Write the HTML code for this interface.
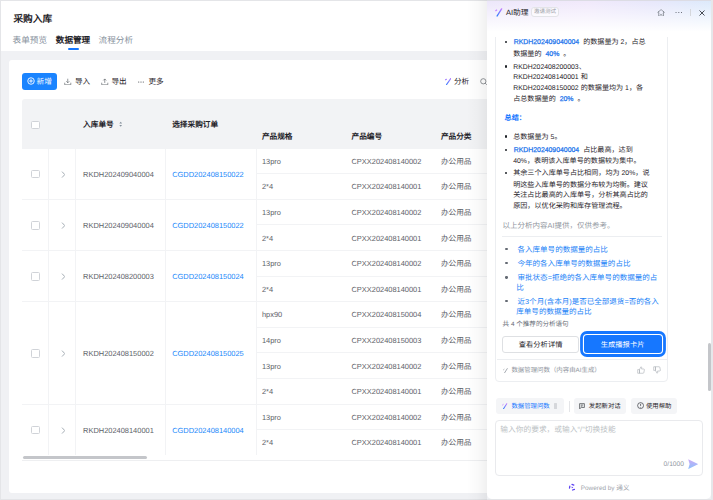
<!DOCTYPE html>
<html lang="zh-CN"><head><meta charset="utf-8"><style>
*{box-sizing:border-box;margin:0;padding:0}
html,body{width:713px;height:500px;overflow:hidden}
body{position:relative;background:#f0f1f4;font-family:"Liberation Sans",sans-serif;color:#1f2329;text-rendering:geometricPrecision}
.a{position:absolute}
.t{position:absolute;white-space:nowrap;transform-origin:0 0}
.c{font-size:103%;font-weight:500}
</style></head><body>
<div class="a" style="left:0.00px;top:0.00px;width:713.00px;height:1.00px;background:#e4e5e8"></div>
<div class="a" style="left:1.00px;top:1.00px;width:712.00px;height:49.50px;background:#fff"></div>
<div class="a" style="left:0.00px;top:0.00px;width:1.00px;height:500.00px;background:#e4e5e8"></div>
<div class="a" style="left:0.00px;top:498.80px;width:713.00px;height:1.20px;background:#e3e4e7"></div>
<div class="a" style="left:711.20px;top:0.00px;width:1.80px;height:500.00px;background:#e6e7ea"></div>
<div class="t" style="left:13.40px;top:12.32px;font-size:9.400px;line-height:13.160px;color:#1f2329;font-weight:400;transform:none;"><span class="c" style="font-weight:700">采购入库</span></div>
<div class="t" style="left:12.60px;top:34.85px;font-size:8.350px;line-height:11.690px;color:#86909c;font-weight:400;transform:none;"><span class="c">表单预览</span></div>
<div class="t" style="left:55.80px;top:34.85px;font-size:8.350px;line-height:11.690px;color:#1f2329;font-weight:400;transform:none;"><span class="c" style="font-weight:700">数据管理</span></div>
<div class="t" style="left:98.60px;top:34.85px;font-size:8.350px;line-height:11.690px;color:#86909c;font-weight:400;transform:none;"><span class="c">流程分析</span></div>
<div class="a" style="left:68.00px;top:48.30px;width:11.00px;height:2.00px;border-radius:1px;background:#1677ff"></div>
<div class="a" style="left:9.00px;top:60.00px;width:690.00px;height:432.50px;background:#fff;border-radius:3px"></div>
<div class="a" style="left:21.60px;top:73.00px;width:35.60px;height:17.00px;background:#1a84ff;border-radius:3px"></div>
<svg class="a" style="left:26.60px;top:77.20px;" width="8" height="8" viewBox="0 0 16 16"><circle cx="8" cy="8" r="6.5" fill="none" stroke="#fff" stroke-width="1.8"/><path d="M8 4.4v7.2M4.4 8h7.2" stroke="#fff" stroke-width="1.8"/></svg>
<div class="t" style="left:36.60px;top:76.98px;font-size:7.450px;line-height:10.430px;color:#fff;font-weight:400;transform:none;"><span class="c">新增</span></div>
<svg class="a" style="left:64.30px;top:77.50px;" width="7.5" height="7.5" viewBox="0 0 16 16"><path d="M8 1.5v8.5M4.8 7l3.2 3.2L11.2 7M1.5 10v4.5h13V10" fill="none" stroke="#5d6168" stroke-width="1.4"/></svg>
<div class="t" style="left:74.90px;top:76.98px;font-size:7.450px;line-height:10.430px;color:#1f2329;font-weight:400;transform:none;"><span class="c">导入</span></div>
<svg class="a" style="left:101.30px;top:77.50px;" width="7.5" height="7.5" viewBox="0 0 16 16"><path d="M8 10.5V2M4.8 5.2L8 2l3.2 3.2M1.5 10v4.5h13V10" fill="none" stroke="#5d6168" stroke-width="1.4"/></svg>
<div class="t" style="left:111.40px;top:76.98px;font-size:7.450px;line-height:10.430px;color:#1f2329;font-weight:400;transform:none;"><span class="c">导出</span></div>
<svg class="a" style="left:138.30px;top:81.10px;" width="6" height="2" viewBox="0 0 12 4"><circle cx="1.5" cy="2" r="1" fill="#1f2329"/><circle cx="6" cy="2" r="1" fill="#1f2329"/><circle cx="10.5" cy="2" r="1" fill="#1f2329"/></svg>
<div class="t" style="left:148.40px;top:76.98px;font-size:7.450px;line-height:10.430px;color:#1f2329;font-weight:400;transform:none;"><span class="c">更多</span></div>
<svg class="a" style="left:444.50px;top:78.00px;" width="6.5" height="7" viewBox="0 0 13 14"><defs><linearGradient id="g1" x1="1" y1="0" x2="0" y2="1"><stop offset="0" stop-color="#b37cff"/><stop offset="1" stop-color="#3a7bff"/></linearGradient></defs><path d="M11.5 1L3.2 13" stroke="url(#g1)" stroke-width="2.5" stroke-linecap="round"/><path d="M1.2 3.6L2.8 2.5" stroke="#a27cff" stroke-width="2.2" stroke-linecap="round"/></svg>
<div class="t" style="left:453.90px;top:76.98px;font-size:7.450px;line-height:10.430px;color:#1f2329;font-weight:400;transform:none;"><span class="c">分析</span></div>
<svg class="a" style="left:479.70px;top:77.80px;" width="7.5" height="7.5" viewBox="0 0 16 16"><circle cx="7" cy="7" r="5.6" fill="none" stroke="#5d6168" stroke-width="1.4"/><path d="M11 11l3.5 3.5" stroke="#5d6168" stroke-width="1.4"/></svg>
<div class="a" style="left:21.70px;top:99.00px;width:680.00px;height:49.50px;background:#f2f3f5;border-radius:3px 3px 0 0"></div>
<div class="a" style="left:31.20px;top:120.70px;width:8.50px;height:8.50px;border:1px solid #d0d3d8;border-radius:1.5px;background:#fff"></div>
<div class="t" style="left:83.10px;top:120.28px;font-size:7.450px;line-height:10.430px;color:#1f2329;font-weight:600;transform:none;"><span class="c" style="font-weight:700">入库单号</span></div>
<svg class="a" style="left:118.90px;top:121.20px;" width="3.4" height="6.4" viewBox="0 0 6 12"><path d="M0.4 4.6L3 1.4l2.6 3.2zM0.4 7.4L3 10.6l2.6-3.2z" fill="#86909c"/></svg>
<div class="t" style="left:172.20px;top:120.28px;font-size:7.450px;line-height:10.430px;color:#1f2329;font-weight:600;transform:none;"><span class="c" style="font-weight:700">选择采购订单</span></div>
<div class="t" style="left:261.90px;top:132.28px;font-size:7.450px;line-height:10.430px;color:#1f2329;font-weight:600;transform:none;"><span class="c" style="font-weight:700">产品规格</span></div>
<div class="t" style="left:351.50px;top:132.28px;font-size:7.450px;line-height:10.430px;color:#1f2329;font-weight:600;transform:none;"><span class="c" style="font-weight:700">产品编号</span></div>
<div class="t" style="left:440.90px;top:132.28px;font-size:7.450px;line-height:10.430px;color:#1f2329;font-weight:600;transform:none;"><span class="c" style="font-weight:700">产品分类</span></div>
<div class="a" style="left:48.30px;top:148.50px;width:1.00px;height:306.00px;background:#f2f3f5"></div>
<div class="a" style="left:75.40px;top:148.50px;width:1.00px;height:306.00px;background:#f2f3f5"></div>
<div class="a" style="left:165.40px;top:148.50px;width:1.00px;height:306.00px;background:#f2f3f5"></div>
<div class="a" style="left:255.50px;top:148.50px;width:1.00px;height:306.00px;background:#f2f3f5"></div>
<div class="a" style="left:21.70px;top:198.80px;width:680.00px;height:1.00px;background:#f2f3f5"></div>
<div class="a" style="left:31.20px;top:169.85px;width:8.50px;height:8.50px;border:1px solid #d0d3d8;border-radius:1.5px;background:#fff"></div>
<svg class="a" style="left:60.50px;top:170.50px;" width="4.6" height="7.2" viewBox="0 0 9 14"><path d="M2 1.2L7.4 7 2 12.8" fill="none" stroke="#77828f" stroke-width="1.3"/></svg>
<div class="t" style="left:83.10px;top:169.69px;font-size:7.450px;line-height:10.430px;color:#5d6168;font-weight:400;transform:none;">RKDH202409040004</div>
<div class="t" style="left:172.20px;top:169.69px;font-size:7.450px;line-height:10.430px;color:#1a88fa;font-weight:400;transform:none;">CGDD202408150022</div>
<div class="a" style="left:255.50px;top:173.20px;width:440.00px;height:1.00px;background:#f2f3f5"></div>
<div class="t" style="left:261.90px;top:156.89px;font-size:7.450px;line-height:10.430px;color:#5d6168;font-weight:400;transform:none;">13pro</div>
<div class="t" style="left:351.50px;top:156.89px;font-size:7.450px;line-height:10.430px;color:#5d6168;font-weight:400;transform:none;">CPXX202408140002</div>
<div class="t" style="left:440.90px;top:156.89px;font-size:7.450px;line-height:10.430px;color:#5d6168;font-weight:400;transform:none;"><span class="c">办公用品</span></div>
<div class="t" style="left:261.90px;top:182.49px;font-size:7.450px;line-height:10.430px;color:#5d6168;font-weight:400;transform:none;">2*4</div>
<div class="t" style="left:351.50px;top:182.49px;font-size:7.450px;line-height:10.430px;color:#5d6168;font-weight:400;transform:none;">CPXX202408140001</div>
<div class="t" style="left:440.90px;top:182.49px;font-size:7.450px;line-height:10.430px;color:#5d6168;font-weight:400;transform:none;"><span class="c">办公用品</span></div>
<div class="a" style="left:21.70px;top:250.00px;width:680.00px;height:1.00px;background:#f2f3f5"></div>
<div class="a" style="left:31.20px;top:221.05px;width:8.50px;height:8.50px;border:1px solid #d0d3d8;border-radius:1.5px;background:#fff"></div>
<svg class="a" style="left:60.50px;top:221.70px;" width="4.6" height="7.2" viewBox="0 0 9 14"><path d="M2 1.2L7.4 7 2 12.8" fill="none" stroke="#77828f" stroke-width="1.3"/></svg>
<div class="t" style="left:83.10px;top:220.88px;font-size:7.450px;line-height:10.430px;color:#5d6168;font-weight:400;transform:none;">RKDH202409040004</div>
<div class="t" style="left:172.20px;top:220.88px;font-size:7.450px;line-height:10.430px;color:#1a88fa;font-weight:400;transform:none;">CGDD202408150022</div>
<div class="a" style="left:255.50px;top:224.40px;width:440.00px;height:1.00px;background:#f2f3f5"></div>
<div class="t" style="left:261.90px;top:208.09px;font-size:7.450px;line-height:10.430px;color:#5d6168;font-weight:400;transform:none;">13pro</div>
<div class="t" style="left:351.50px;top:208.09px;font-size:7.450px;line-height:10.430px;color:#5d6168;font-weight:400;transform:none;">CPXX202408140002</div>
<div class="t" style="left:440.90px;top:208.09px;font-size:7.450px;line-height:10.430px;color:#5d6168;font-weight:400;transform:none;"><span class="c">办公用品</span></div>
<div class="t" style="left:261.90px;top:233.69px;font-size:7.450px;line-height:10.430px;color:#5d6168;font-weight:400;transform:none;">2*4</div>
<div class="t" style="left:351.50px;top:233.69px;font-size:7.450px;line-height:10.430px;color:#5d6168;font-weight:400;transform:none;">CPXX202408140001</div>
<div class="t" style="left:440.90px;top:233.69px;font-size:7.450px;line-height:10.430px;color:#5d6168;font-weight:400;transform:none;"><span class="c">办公用品</span></div>
<div class="a" style="left:21.70px;top:301.20px;width:680.00px;height:1.00px;background:#f2f3f5"></div>
<div class="a" style="left:31.20px;top:272.25px;width:8.50px;height:8.50px;border:1px solid #d0d3d8;border-radius:1.5px;background:#fff"></div>
<svg class="a" style="left:60.50px;top:272.90px;" width="4.6" height="7.2" viewBox="0 0 9 14"><path d="M2 1.2L7.4 7 2 12.8" fill="none" stroke="#77828f" stroke-width="1.3"/></svg>
<div class="t" style="left:83.10px;top:272.09px;font-size:7.450px;line-height:10.430px;color:#5d6168;font-weight:400;transform:none;">RKDH202408200003</div>
<div class="t" style="left:172.20px;top:272.09px;font-size:7.450px;line-height:10.430px;color:#1a88fa;font-weight:400;transform:none;">CGDD202408150024</div>
<div class="a" style="left:255.50px;top:275.60px;width:440.00px;height:1.00px;background:#f2f3f5"></div>
<div class="t" style="left:261.90px;top:259.29px;font-size:7.450px;line-height:10.430px;color:#5d6168;font-weight:400;transform:none;">13pro</div>
<div class="t" style="left:351.50px;top:259.29px;font-size:7.450px;line-height:10.430px;color:#5d6168;font-weight:400;transform:none;">CPXX202408140002</div>
<div class="t" style="left:440.90px;top:259.29px;font-size:7.450px;line-height:10.430px;color:#5d6168;font-weight:400;transform:none;"><span class="c">办公用品</span></div>
<div class="t" style="left:261.90px;top:284.89px;font-size:7.450px;line-height:10.430px;color:#5d6168;font-weight:400;transform:none;">2*4</div>
<div class="t" style="left:351.50px;top:284.89px;font-size:7.450px;line-height:10.430px;color:#5d6168;font-weight:400;transform:none;">CPXX202408140001</div>
<div class="t" style="left:440.90px;top:284.89px;font-size:7.450px;line-height:10.430px;color:#5d6168;font-weight:400;transform:none;"><span class="c">办公用品</span></div>
<div class="a" style="left:21.70px;top:403.60px;width:680.00px;height:1.00px;background:#f2f3f5"></div>
<div class="a" style="left:31.20px;top:349.05px;width:8.50px;height:8.50px;border:1px solid #d0d3d8;border-radius:1.5px;background:#fff"></div>
<svg class="a" style="left:60.50px;top:349.70px;" width="4.6" height="7.2" viewBox="0 0 9 14"><path d="M2 1.2L7.4 7 2 12.8" fill="none" stroke="#77828f" stroke-width="1.3"/></svg>
<div class="t" style="left:83.10px;top:348.88px;font-size:7.450px;line-height:10.430px;color:#5d6168;font-weight:400;transform:none;">RKDH202408150002</div>
<div class="t" style="left:172.20px;top:348.88px;font-size:7.450px;line-height:10.430px;color:#1a88fa;font-weight:400;transform:none;">CGDD202408150025</div>
<div class="a" style="left:255.50px;top:326.80px;width:440.00px;height:1.00px;background:#f2f3f5"></div>
<div class="t" style="left:261.90px;top:310.49px;font-size:7.450px;line-height:10.430px;color:#5d6168;font-weight:400;transform:none;">hpx90</div>
<div class="t" style="left:351.50px;top:310.49px;font-size:7.450px;line-height:10.430px;color:#5d6168;font-weight:400;transform:none;">CPXX202408150004</div>
<div class="t" style="left:440.90px;top:310.49px;font-size:7.450px;line-height:10.430px;color:#5d6168;font-weight:400;transform:none;"><span class="c">办公用品</span></div>
<div class="a" style="left:255.50px;top:352.40px;width:440.00px;height:1.00px;background:#f2f3f5"></div>
<div class="t" style="left:261.90px;top:336.09px;font-size:7.450px;line-height:10.430px;color:#5d6168;font-weight:400;transform:none;">14pro</div>
<div class="t" style="left:351.50px;top:336.09px;font-size:7.450px;line-height:10.430px;color:#5d6168;font-weight:400;transform:none;">CPXX202408150003</div>
<div class="t" style="left:440.90px;top:336.09px;font-size:7.450px;line-height:10.430px;color:#5d6168;font-weight:400;transform:none;"><span class="c">办公用品</span></div>
<div class="a" style="left:255.50px;top:378.00px;width:440.00px;height:1.00px;background:#f2f3f5"></div>
<div class="t" style="left:261.90px;top:361.69px;font-size:7.450px;line-height:10.430px;color:#5d6168;font-weight:400;transform:none;">13pro</div>
<div class="t" style="left:351.50px;top:361.69px;font-size:7.450px;line-height:10.430px;color:#5d6168;font-weight:400;transform:none;">CPXX202408140002</div>
<div class="t" style="left:440.90px;top:361.69px;font-size:7.450px;line-height:10.430px;color:#5d6168;font-weight:400;transform:none;"><span class="c">办公用品</span></div>
<div class="t" style="left:261.90px;top:387.29px;font-size:7.450px;line-height:10.430px;color:#5d6168;font-weight:400;transform:none;">2*4</div>
<div class="t" style="left:351.50px;top:387.29px;font-size:7.450px;line-height:10.430px;color:#5d6168;font-weight:400;transform:none;">CPXX202408140001</div>
<div class="t" style="left:440.90px;top:387.29px;font-size:7.450px;line-height:10.430px;color:#5d6168;font-weight:400;transform:none;"><span class="c">办公用品</span></div>
<div class="a" style="left:31.20px;top:425.85px;width:8.50px;height:8.50px;border:1px solid #d0d3d8;border-radius:1.5px;background:#fff"></div>
<svg class="a" style="left:60.50px;top:426.50px;" width="4.6" height="7.2" viewBox="0 0 9 14"><path d="M2 1.2L7.4 7 2 12.8" fill="none" stroke="#77828f" stroke-width="1.3"/></svg>
<div class="t" style="left:83.10px;top:425.69px;font-size:7.450px;line-height:10.430px;color:#5d6168;font-weight:400;transform:none;">RKDH202408140001</div>
<div class="t" style="left:172.20px;top:425.69px;font-size:7.450px;line-height:10.430px;color:#1a88fa;font-weight:400;transform:none;">CGDD202408140004</div>
<div class="a" style="left:255.50px;top:429.20px;width:440.00px;height:1.00px;background:#f2f3f5"></div>
<div class="t" style="left:261.90px;top:412.89px;font-size:7.450px;line-height:10.430px;color:#5d6168;font-weight:400;transform:none;">13pro</div>
<div class="t" style="left:351.50px;top:412.89px;font-size:7.450px;line-height:10.430px;color:#5d6168;font-weight:400;transform:none;">CPXX202408140002</div>
<div class="t" style="left:440.90px;top:412.89px;font-size:7.450px;line-height:10.430px;color:#5d6168;font-weight:400;transform:none;"><span class="c">办公用品</span></div>
<div class="t" style="left:261.90px;top:438.49px;font-size:7.450px;line-height:10.430px;color:#5d6168;font-weight:400;transform:none;">2*4</div>
<div class="t" style="left:351.50px;top:438.49px;font-size:7.450px;line-height:10.430px;color:#5d6168;font-weight:400;transform:none;">CPXX202408140001</div>
<div class="t" style="left:440.90px;top:438.49px;font-size:7.450px;line-height:10.430px;color:#5d6168;font-weight:400;transform:none;"><span class="c">办公用品</span></div>
<div class="a" style="left:21.70px;top:459.70px;width:680.00px;height:1.00px;background:#eeeff1"></div>
<div class="a" style="left:23.20px;top:455.90px;width:124.00px;height:3.00px;border-radius:1.5px;background:#c4c6ca"></div>
<div class="a" style="left:467.00px;top:0.00px;width:20.00px;height:500.00px;background:linear-gradient(90deg,rgba(0,0,0,0) 0%,rgba(0,0,0,0.02) 50%,rgba(0,0,0,0.06) 100%)"></div>
<div class="a" style="left:487.00px;top:0.00px;width:224.00px;height:498.50px;background:#fff;border-radius:0 0 5px 5px"></div>
<div class="a" style="left:495.20px;top:20.00px;width:172.60px;height:361.60px;border:1px solid #eceef1;border-radius:4px;background:#fff"></div>
<div class="a" style="left:505.05px;top:40.85px;width:2.30px;height:2.30px;border-radius:50%;background:#1f2329"></div>
<div class="t" style="left:513.20px;top:38.47px;font-size:6.900px;line-height:9.660px;color:#1f2329;font-weight:400;transform:none;margin-left:-1.5px"><span style="color:#1c74ec;font-weight:400;-webkit-text-stroke:0.25px #1c74ec;padding:0 2px">RKDH202409040004</span> <span class="c">的数据量为</span> 2<span class="c">，占总</span></div>
<div class="t" style="left:513.20px;top:49.87px;font-size:6.900px;line-height:9.660px;color:#1f2329;font-weight:400;transform:none;"><span class="c">数据量的</span> <span style="color:#1c74ec;font-weight:400;-webkit-text-stroke:0.25px #1c74ec;padding:0 2px">40%</span> <span class="c">。</span></div>
<div class="a" style="left:505.05px;top:65.35px;width:2.30px;height:2.30px;border-radius:50%;background:#1f2329"></div>
<div class="t" style="left:513.20px;top:63.17px;font-size:6.900px;line-height:9.660px;color:#1f2329;font-weight:400;transform:none;">RKDH202408200003<span class="c">、</span></div>
<div class="t" style="left:513.20px;top:73.47px;font-size:6.900px;line-height:9.660px;color:#1f2329;font-weight:400;transform:none;">RKDH202408140001 <span class="c">和</span></div>
<div class="t" style="left:513.20px;top:84.37px;font-size:6.900px;line-height:9.660px;color:#1f2329;font-weight:400;transform:none;">RKDH202408150002 <span class="c">的数据量均为</span> 1<span class="c">，各</span></div>
<div class="t" style="left:513.20px;top:95.47px;font-size:6.900px;line-height:9.660px;color:#1f2329;font-weight:400;transform:none;"><span class="c">占总数据量的</span> <span style="color:#1c74ec;font-weight:400;-webkit-text-stroke:0.25px #1c74ec;padding:0 2px">20%</span> <span class="c">。</span></div>
<div class="t" style="left:504.60px;top:113.97px;font-size:6.900px;line-height:9.660px;color:#1677ff;font-weight:600;transform:none;"><span class="c" style="font-weight:600">总结：</span></div>
<div class="a" style="left:505.05px;top:135.45px;width:2.30px;height:2.30px;border-radius:50%;background:#1f2329"></div>
<div class="t" style="left:513.20px;top:132.57px;font-size:6.900px;line-height:9.660px;color:#1f2329;font-weight:400;transform:none;"><span class="c">总数据量为</span> 5<span class="c">。</span></div>
<div class="a" style="left:505.05px;top:148.85px;width:2.30px;height:2.30px;border-radius:50%;background:#1f2329"></div>
<div class="t" style="left:513.20px;top:146.37px;font-size:6.900px;line-height:9.660px;color:#1f2329;font-weight:400;transform:none;margin-left:-1.5px"><span style="color:#1c74ec;font-weight:400;-webkit-text-stroke:0.25px #1c74ec;padding:0 2px">RKDH202409040004</span> <span class="c">占比最高，达到</span></div>
<div class="t" style="left:513.20px;top:157.17px;font-size:6.900px;line-height:9.660px;color:#1f2329;font-weight:400;transform:none;">40%<span class="c">，表明该入库单号的数据较为集中。</span></div>
<div class="a" style="left:505.05px;top:171.75px;width:2.30px;height:2.30px;border-radius:50%;background:#1f2329"></div>
<div class="t" style="left:513.20px;top:169.37px;font-size:6.900px;line-height:9.660px;color:#1f2329;font-weight:400;transform:none;"><span class="c">其余三个入库单号占比相同，均为</span> 20%<span class="c">，说</span></div>
<div class="t" style="left:513.20px;top:181.47px;font-size:6.900px;line-height:9.660px;color:#1f2329;font-weight:400;transform:none;"><span class="c">明这些入库单号的数据分布较为均衡。建议</span></div>
<div class="t" style="left:513.20px;top:191.17px;font-size:6.900px;line-height:9.660px;color:#1f2329;font-weight:400;transform:none;"><span class="c">关注占比最高的入库单号，分析其高占比的</span></div>
<div class="t" style="left:513.20px;top:202.27px;font-size:6.900px;line-height:9.660px;color:#1f2329;font-weight:400;transform:none;"><span class="c">原因，以优化采购和库存管理流程。</span></div>
<div class="t" style="left:502.60px;top:220.89px;font-size:7.300px;line-height:10.220px;color:#8f959e;font-weight:400;transform:none;"><span class="c">以上分析内容</span>AI<span class="c">提供，仅供参考。</span></div>
<div class="a" style="left:502.00px;top:235.60px;width:160.00px;height:1.00px;background:#eceef1"></div>
<div class="a" style="left:505.25px;top:248.05px;width:2.30px;height:2.30px;border-radius:50%;background:#646a73"></div>
<div class="t" style="left:517.50px;top:244.87px;font-size:7.330px;line-height:10.262px;color:#1a82f7;font-weight:400;transform:none;"><span class="c">各入库单号的数据量的占比</span></div>
<div class="a" style="left:505.25px;top:261.95px;width:2.30px;height:2.30px;border-radius:50%;background:#646a73"></div>
<div class="t" style="left:517.50px;top:258.77px;font-size:7.330px;line-height:10.262px;color:#1a82f7;font-weight:400;transform:none;"><span class="c">今年的各入库单号的数据量的占比</span></div>
<div class="a" style="left:505.25px;top:276.25px;width:2.30px;height:2.30px;border-radius:50%;background:#646a73"></div>
<div class="t" style="left:517.50px;top:273.07px;font-size:7.330px;line-height:10.262px;color:#1a82f7;font-weight:400;transform:none;"><span class="c">审批状态</span>=<span class="c">拒绝的各入库单号的数据量的占</span></div>
<div class="a" style="left:505.25px;top:300.05px;width:2.30px;height:2.30px;border-radius:50%;background:#646a73"></div>
<div class="t" style="left:517.50px;top:296.87px;font-size:7.330px;line-height:10.262px;color:#1a82f7;font-weight:400;transform:none;"><span class="c">近</span>3<span class="c">个月</span>(<span class="c">含本月</span>)<span class="c">是否已全部退货</span>=<span class="c">否的各入</span></div>
<div class="t" style="left:516.30px;top:283.37px;font-size:7.330px;line-height:10.262px;color:#1a82f7;font-weight:400;transform:none;"><span class="c">比</span></div>
<div class="t" style="left:516.30px;top:306.97px;font-size:7.330px;line-height:10.262px;color:#1a82f7;font-weight:400;transform:none;"><span class="c">库单号的数据量的占比</span></div>
<div class="t" style="left:502.60px;top:321.34px;font-size:6.370px;line-height:8.918px;color:#646a73;font-weight:400;transform:none;"><span class="c">共</span> 4 <span class="c">个推荐的分析语句</span></div>
<div class="a" style="left:502.00px;top:335.50px;width:77.30px;height:17.00px;border:1px solid #dee0e3;border-radius:3px;background:#fff"></div>
<div class="t" style="left:540.60px;top:339.83px;font-size:7.100px;line-height:9.940px;color:#1f2329;font-weight:400;transform:translateX(-50%);"><span class="c" style="font-weight:500">查看分析详情</span></div>
<div class="a" style="left:583.60px;top:335.00px;width:78.00px;height:17.60px;border-radius:3px;background:#1677ff;box-shadow:0 0 0 1.1px #fff,0 0 0 3.9px #1677ff"></div>
<div class="t" style="left:622.60px;top:339.83px;font-size:7.100px;line-height:9.940px;color:#fff;font-weight:400;transform:translateX(-50%);"><span class="c">生成播报卡片</span></div>
<div class="a" style="left:496.50px;top:359.00px;width:170.40px;height:1.00px;background:#eceef1"></div>
<svg class="a" style="left:503.00px;top:367.60px;" width="5.2" height="5.85" viewBox="0 0 16 18"><defs><linearGradient id="g3" x1="1" y1="0" x2="0" y2="1"><stop offset="0" stop-color="#9aa0a8"/><stop offset="1" stop-color="#9aa0a8"/></linearGradient></defs><path d="M13.2 1.8L4.2 16" stroke="url(#g3)" stroke-width="2.8" stroke-linecap="round"/><path d="M1.6 5.4L3.2 4.2" stroke="#9aa0a8" stroke-width="2.4" stroke-linecap="round"/></svg>
<div class="t" style="left:511.40px;top:367.12px;font-size:6.250px;line-height:8.750px;color:#8f959e;font-weight:400;transform:none;"><span class="c">数据管理问数（内容由</span>AI<span class="c">生成）</span></div>
<svg class="a" style="left:636.80px;top:366.30px;" width="8" height="8" viewBox="0 0 16 16"><path d="M5 7.2L7.8 1.6c1 0 1.9.8 1.7 2L9.1 6h4.3c.9 0 1.6.8 1.4 1.7l-1.2 5.8c-.1.6-.7 1-1.3 1H5zM1.4 7.2H5v7.3H1.4z" fill="none" stroke="#a9aeb5" stroke-width="1.2" stroke-linejoin="round"/></svg>
<svg class="a" style="left:652.80px;top:366.20px;transform:rotate(180deg) scaleX(-1)" width="8" height="8" viewBox="0 0 16 16"><path d="M5 7.2L7.8 1.6c1 0 1.9.8 1.7 2L9.1 6h4.3c.9 0 1.6.8 1.4 1.7l-1.2 5.8c-.1.6-.7 1-1.3 1H5zM1.4 7.2H5v7.3H1.4z" fill="none" stroke="#a9aeb5" stroke-width="1.2" stroke-linejoin="round"/></svg>
<div class="a" style="left:495.60px;top:398.10px;width:68.80px;height:15.70px;border-radius:3px;background:#f4f5f7"></div>
<svg class="a" style="left:502.40px;top:402.60px;" width="5.8" height="6.52" viewBox="0 0 16 18"><defs><linearGradient id="g4" x1="1" y1="0" x2="0" y2="1"><stop offset="0" stop-color="#c27cff"/><stop offset="1" stop-color="#2e7cff"/></linearGradient></defs><path d="M13.2 1.8L4.2 16" stroke="url(#g4)" stroke-width="2.8" stroke-linecap="round"/><path d="M1.6 5.4L3.2 4.2" stroke="#c27cff" stroke-width="2.4" stroke-linecap="round"/></svg>
<div class="t" style="left:511.40px;top:403.36px;font-size:6.200px;line-height:8.680px;color:#1677ff;font-weight:400;transform:none;"><span class="c" style="font-weight:500">数据管理问数</span></div>
<div class="a" style="left:554.20px;top:403.20px;width:2.80px;height:5.80px;background:#d5d7db;border-radius:0.5px"></div>
<div class="a" style="left:568.60px;top:400.50px;width:0.80px;height:11.00px;background:#e4e5e8"></div>
<div class="a" style="left:573.80px;top:398.10px;width:52.20px;height:15.70px;border-radius:3px;background:#f4f5f7"></div>
<svg class="a" style="left:579.10px;top:402.60px;" width="6" height="6.6" viewBox="0 0 12 13"><path d="M1.2 1.2h9.6v7.6H4.6L1.2 11.6z" fill="none" stroke="#1f2329" stroke-width="1.2" stroke-linejoin="round"/><path d="M3.6 4h4.8M3.6 6.2h3.2" stroke="#1f2329" stroke-width="1.1"/></svg>
<div class="t" style="left:588.80px;top:403.36px;font-size:6.200px;line-height:8.680px;color:#1f2329;font-weight:400;transform:none;"><span class="c">发起新对话</span></div>
<div class="a" style="left:631.40px;top:398.10px;width:45.60px;height:15.70px;border-radius:3px;background:#f4f5f7"></div>
<svg class="a" style="left:636.60px;top:402.40px;" width="7.2" height="7.2" viewBox="0 0 14 14"><circle cx="7" cy="7" r="5.8" fill="none" stroke="#1f2329" stroke-width="1.2"/><path d="M7 3.6v4" stroke="#1f2329" stroke-width="1.3"/><circle cx="7" cy="10" r=".8" fill="#1f2329"/></svg>
<div class="t" style="left:645.90px;top:403.36px;font-size:6.200px;line-height:8.680px;color:#1f2329;font-weight:400;transform:none;"><span class="c">使用帮助</span></div>
<div class="a" style="left:495.40px;top:420.30px;width:207.20px;height:55.50px;border:1px solid #e9eaed;border-radius:4px;background:#fff"></div>
<div class="t" style="left:500.30px;top:425.15px;font-size:7.500px;line-height:10.500px;color:#bbbfc4;font-weight:400;transform:none;"><span class="c">输入你的要求，或输入“</span>/<span class="c">”切换技能</span></div>
<div class="t" style="left:663.60px;top:460.23px;font-size:6.670px;line-height:9.338px;color:#8f959e;font-weight:400;transform:none;">0/1000</div>
<svg class="a" style="left:688.00px;top:458.60px;" width="10.4" height="10.4" viewBox="0 0 10.4 10.4"><defs><linearGradient id="g5" x1="0" y1="0" x2="0" y2="1"><stop offset="0" stop-color="#cdaaf6"/><stop offset="1" stop-color="#8cc2fb"/></linearGradient></defs><path d="M0.2 0.2L10.2 5.1L0.2 10.1L1.6 5.1Z" fill="url(#g5)"/></svg>
<svg class="a" style="left:568.40px;top:483.20px;" width="8.6" height="8.6" viewBox="0 0 16 16"><g fill="#5a3ff2"><rect x="6.2" y="2" width="6" height="2.3" rx="1.1" transform="rotate(20 9 3)"/><rect x="6.2" y="2" width="6" height="2.3" rx="1.1" transform="rotate(140 8 8) rotate(20 9 3)"/><rect x="6.2" y="2" width="6" height="2.3" rx="1.1" transform="rotate(260 8 8) rotate(20 9 3)"/><path d="M6.8 6.4L10 8.2 7 9.8z"/></g></svg>
<div class="t" style="left:580.80px;top:484.72px;font-size:6.400px;line-height:8.960px;color:#a0a5ad;font-weight:400;transform:none;">Powered by <span class="c">通义</span></div>
<div class="a" style="left:708.00px;top:343.00px;width:3.00px;height:48.00px;border-radius:1.5px;background:#c4c6ca"></div>
<div class="a" style="left:487.00px;top:0.00px;width:224.00px;height:37.00px;background:linear-gradient(180deg,rgba(255,255,255,0) 0%,rgba(255,255,255,.7) 60%,#fff 86%,#fff 100%),linear-gradient(90deg,#ece6fa 0%,#f0e8fb 45%,#e6e6fb 75%,#dbe9fb 100%)"></div>
<div class="a" style="left:487.00px;top:0.00px;width:224.00px;height:0.80px;background:#dcdce4"></div>
<svg class="a" style="left:494.80px;top:7.60px;" width="8" height="9.0" viewBox="0 0 16 18"><defs><linearGradient id="g2" x1="1" y1="0" x2="0" y2="1"><stop offset="0" stop-color="#c27cff"/><stop offset="1" stop-color="#2e7cff"/></linearGradient></defs><path d="M13.2 1.8L4.2 16" stroke="url(#g2)" stroke-width="2.8" stroke-linecap="round"/><path d="M1.6 5.4L3.2 4.2" stroke="#c27cff" stroke-width="2.4" stroke-linecap="round"/></svg>
<div class="t" style="left:505.90px;top:7.55px;font-size:7.500px;line-height:10.500px;color:#1f2329;font-weight:400;transform:none;">AI<span class="c" style="font-weight:500">助理</span></div>
<div class="a" style="left:531.40px;top:6.70px;width:27.60px;height:10.40px;border:0.8px solid #e3e4e8;border-radius:3px;background:rgba(255,255,255,.6)"></div>
<div class="t" style="left:534.00px;top:8.96px;font-size:5.350px;line-height:7.490px;color:#9ca0a7;font-weight:400;transform:none;"><span class="c">邀请测试</span></div>
<svg class="a" style="left:657.20px;top:8.80px;" width="8.2" height="7.6" viewBox="0 0 16 15"><path d="M1.5 6.6L8 1.2l6.5 5.4M3.2 5.4v8.4h9.6V5.4M5.8 10.2c1.4 1.2 3 1.2 4.4 0" fill="none" stroke="#646a73" stroke-width="1.2" stroke-linejoin="round" stroke-linecap="round"/></svg>
<svg class="a" style="left:674.60px;top:10.70px;" width="7.6" height="3" viewBox="0 0 16 6"><circle cx="2.2" cy="3" r="1.3" fill="#646a73"/><circle cx="8" cy="3" r="1.3" fill="#646a73"/><circle cx="13.8" cy="3" r="1.3" fill="#646a73"/></svg>
<div class="a" style="left:690.00px;top:9.30px;width:0.80px;height:6.40px;background:#d5d7db"></div>
<svg class="a" style="left:698.60px;top:9.80px;" width="6" height="6" viewBox="0 0 12 12"><path d="M1 1l10 10M11 1L1 11" stroke="#1f2329" stroke-width="1.6"/></svg>
</body></html>
